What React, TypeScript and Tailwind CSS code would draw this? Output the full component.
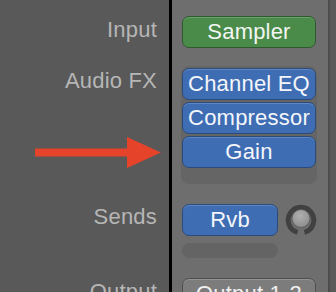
import React from 'react';

const font = { fontFamily: '"Liberation Sans", Arial, sans-serif' };

const Slot = ({ label, color }: { label: string; color: 'blue' | 'green' | 'grey' }) => {
  const tone = {
    blue: 'bg-[#3e6db4] border-[#2b4b7c] text-[#f4f6fa]',
    green: 'bg-[#4a8b4a] border-[#2f5a30] text-[#f2f6f2]',
    grey: 'bg-[#7c7c7c] border-[#4f4f4f] text-[#f0f0f0]',
  }[color];
  return (
    <div
      className={`h-[32px] shrink-0 rounded-[7px] border flex items-center justify-center text-[22px] leading-none tracking-[0.2px] shadow-[inset_0_1px_0_rgba(255,255,255,0.18)] ${tone}`}
    >
      {label}
    </div>
  );
};

const Knob = () => (
  <svg width="32" height="32" viewBox="0 0 32 32" className="shrink-0">
    <defs>
      <radialGradient id="kg" cx="45%" cy="35%" r="70%">
        <stop offset="0%" stopColor="#b0b0b0" />
        <stop offset="100%" stopColor="#8a8a8a" />
      </radialGradient>
    </defs>
    {/* ring, open at the bottom */}
    <path
      d="M12.6 28.4 A12.8 12.8 0 1 1 19.4 28.4"
      fill="none"
      stroke="#414141"
      strokeWidth="5"
    />
    <circle cx="16" cy="14.5" r="9" fill="url(#kg)" stroke="#555" strokeWidth="0.8" />
  </svg>
);

export default function App() {
  return (
    <div className="w-[336px] h-[292px] overflow-hidden flex" style={font}>
      {/* labels */}
      <div className="relative w-[169px] shrink-0 bg-[#595959] flex flex-col items-end pr-[12px] text-[22px] leading-[26px] tracking-[0.2px] text-[#b6b6b6]">
        <div className="mt-[17px] shrink-0">Input</div>
        <div className="mt-[25px] shrink-0">Audio FX</div>
        <div className="mt-[110px] shrink-0">Sends</div>
        <div className="mt-[49px] shrink-0">Output</div>

        {/* annotation arrow */}
        <svg
          className="absolute left-[35px] top-[137px]"
          width="126"
          height="32"
          viewBox="0 0 126 32"
        >
          <rect x="0" y="11.5" width="94" height="8" fill="#e5432a" />
          <polygon points="92,0 126,15.5 92,31" fill="#e5432a" />
        </svg>
      </div>

      {/* divider */}
      <div className="w-[3px] shrink-0 bg-black" />

      {/* channel strip */}
      <div className="w-[156px] shrink-0 bg-[#6e6e6e] flex flex-col pl-[10px] pr-[12px] pt-[16px]">
        <Slot label="Sampler" color="green" />

        <div className="mt-[18px] -mx-[1px] h-[118px] shrink-0 rounded-[8px] bg-[#656565] px-[1px] pt-[2px] flex flex-col gap-[2px]">
          <Slot label="Channel EQ" color="blue" />
          <Slot label="Compressor" color="blue" />
          <Slot label="Gain" color="blue" />
        </div>

        <div className="mt-[20px] shrink-0 flex items-center gap-[7px]">
          <div className="w-[96px] shrink-0">
            <Slot label="Rvb" color="blue" />
          </div>
          <Knob />
        </div>
        <div className="mt-[7px] shrink-0 w-[96px] h-[15px] rounded-full bg-[#646464]" />

        <div className="mt-[20px] shrink-0">
          <Slot label="Output 1-2" color="grey" />
        </div>
      </div>

      {/* edge */}
      <div className="w-[2px] shrink-0 bg-[#4c4c4c]" />
      <div className="flex-1 bg-[#5a5a5a]" />
    </div>
  );
}
